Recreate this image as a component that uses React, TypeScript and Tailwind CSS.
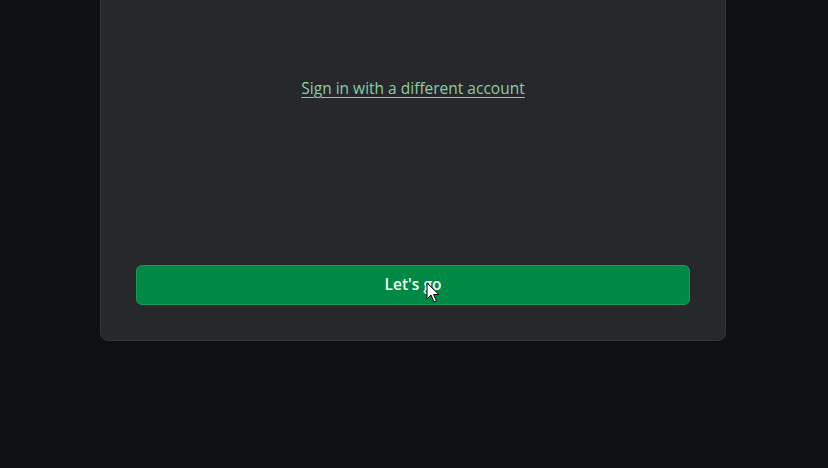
import React from 'react';

const Cursor: React.FC = () => (
  <svg
    className="pointer-events-none absolute left-[426px] top-[282px]"
    width="14"
    height="22"
    viewBox="0 0 14 22"
  >
    <path
      d="M1 1 L1 17 L5 13 L8 20 L10.5 19 L7.5 12.5 L13 12.5 Z"
      fill="#ffffff"
      stroke="#000000"
      strokeWidth="1"
      strokeLinejoin="round"
    />
  </svg>
);

const App: React.FC = () => {
  return (
    <div
      className="relative h-[468px] w-[828px] overflow-hidden bg-[#0f1014]"
      style={{ fontFamily: '"Open Sans", "Noto Sans", sans-serif' }}
    >
      <div className="ml-[100px] -mt-[20px] flex h-[361px] w-[626px] flex-col rounded-lg border border-[#35363a] bg-[#27282c] px-[35px] pb-[35px]">
        <div className="flex h-[128px] items-end justify-center pb-[9px]">
          <a
            href="#"
            className="text-[15.5px] text-[#8ccda4] underline decoration-1 underline-offset-[3px]"
          >
            Sign in with a different account
          </a>
        </div>
        <div className="flex-1" />
        <button className="h-[40px] w-full rounded-md border border-[#1d9a58] bg-[#008945] text-[15.5px] font-semibold text-[#f2fff6]">
          Let's go
        </button>
      </div>
      <Cursor />
    </div>
  );
};

export default App;
